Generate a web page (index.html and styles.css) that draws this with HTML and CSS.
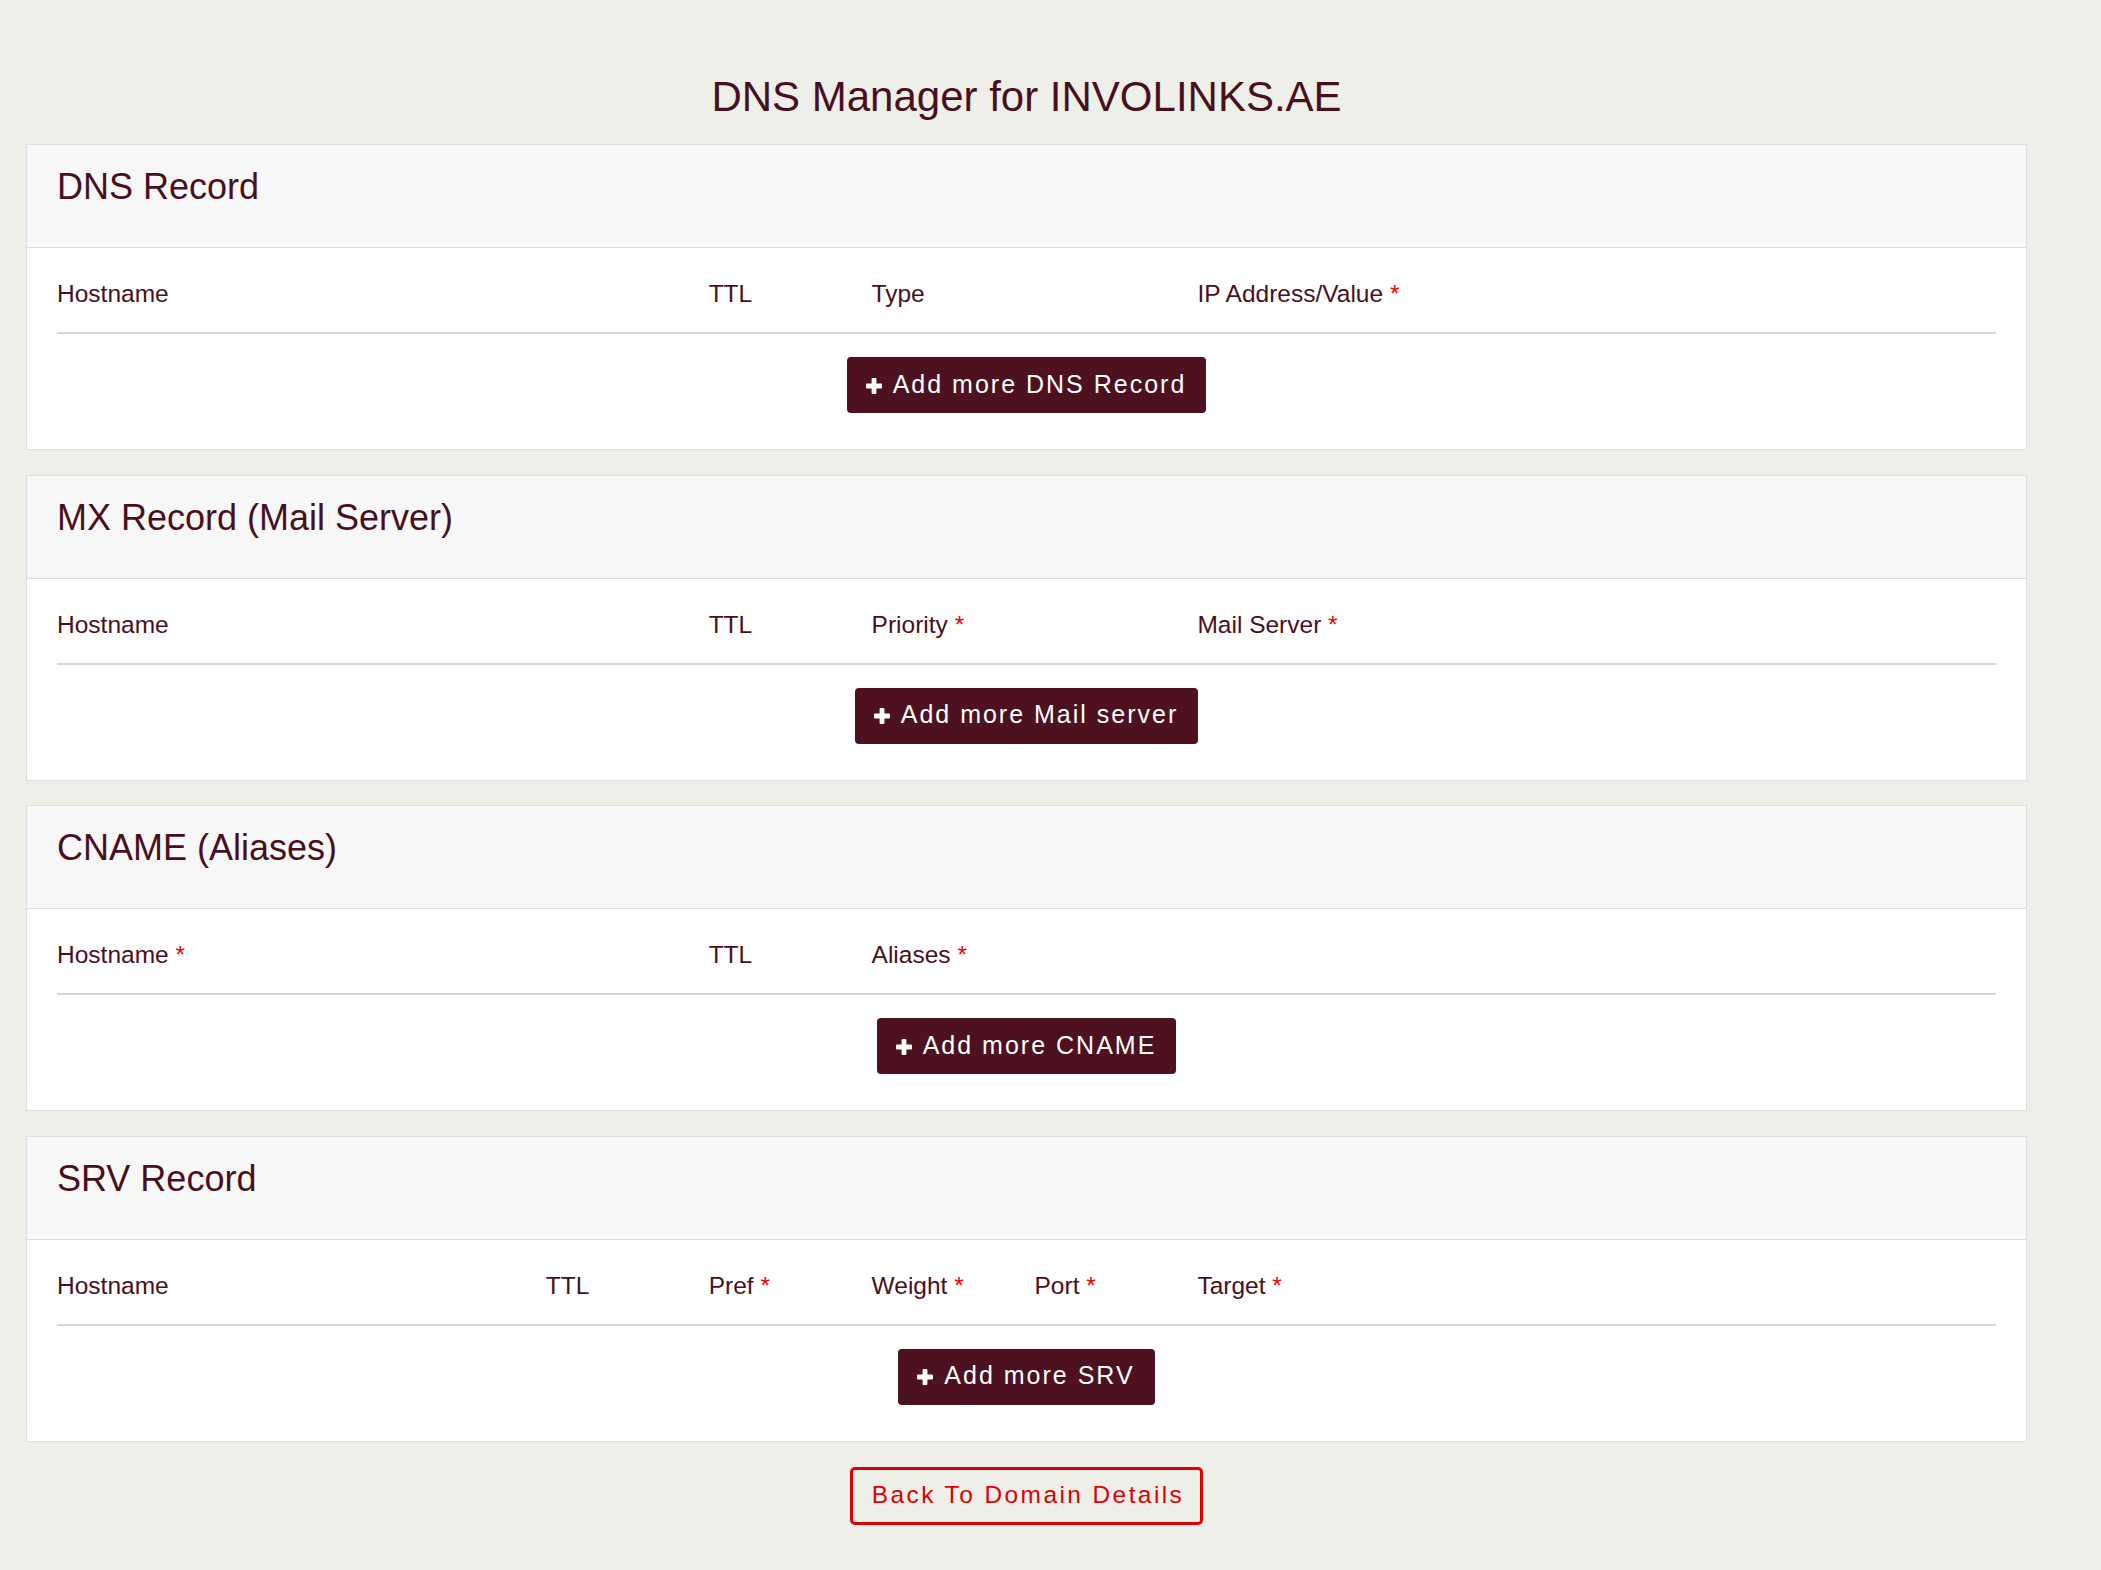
FILE: index.html
```html
<!DOCTYPE html>
<html lang="en">
<head>
<meta charset="utf-8">
<title>DNS Manager for INVOLINKS.AE</title>
<link rel="stylesheet" href="styles.css">
</head>
<body>
<div class="page">
  <h1 class="page-title">DNS Manager for INVOLINKS.AE</h1>

  <section class="card">
    <div class="card-header"><h2>DNS Record</h2></div>
    <div class="card-body">
      <div class="label-row">
        <div class="c0">Hostname</div>
        <div class="c4">TTL</div>
        <div class="c5">Type</div>
        <div class="c7">IP Address/Value <span class="req">*</span></div>
      </div>
      <div class="actions">
        <button class="btn-add" type="button"><svg class="plus" viewBox="0 0 16 16" aria-hidden="true"><rect x="5.6" y="0" width="4.8" height="16" rx="1"/><rect x="0" y="5.6" width="16" height="4.8" rx="1"/></svg><span>Add more DNS Record</span></button>
      </div>
    </div>
  </section>

  <section class="card">
    <div class="card-header"><h2>MX Record (Mail Server)</h2></div>
    <div class="card-body">
      <div class="label-row">
        <div class="c0">Hostname</div>
        <div class="c4">TTL</div>
        <div class="c5">Priority <span class="req">*</span></div>
        <div class="c7">Mail Server <span class="req">*</span></div>
      </div>
      <div class="actions">
        <button class="btn-add" type="button"><svg class="plus" viewBox="0 0 16 16" aria-hidden="true"><rect x="5.6" y="0" width="4.8" height="16" rx="1"/><rect x="0" y="5.6" width="16" height="4.8" rx="1"/></svg><span>Add more Mail server</span></button>
      </div>
    </div>
  </section>

  <section class="card">
    <div class="card-header"><h2>CNAME (Aliases)</h2></div>
    <div class="card-body">
      <div class="label-row">
        <div class="c0">Hostname <span class="req">*</span></div>
        <div class="c4">TTL</div>
        <div class="c5">Aliases <span class="req">*</span></div>
      </div>
      <div class="actions">
        <button class="btn-add" type="button"><svg class="plus" viewBox="0 0 16 16" aria-hidden="true"><rect x="5.6" y="0" width="4.8" height="16" rx="1"/><rect x="0" y="5.6" width="16" height="4.8" rx="1"/></svg><span>Add more CNAME</span></button>
      </div>
    </div>
  </section>

  <section class="card">
    <div class="card-header"><h2>SRV Record</h2></div>
    <div class="card-body">
      <div class="label-row">
        <div class="c0">Hostname</div>
        <div class="c3">TTL</div>
        <div class="c4">Pref <span class="req">*</span></div>
        <div class="c5">Weight <span class="req">*</span></div>
        <div class="c6">Port <span class="req">*</span></div>
        <div class="c7">Target <span class="req">*</span></div>
      </div>
      <div class="actions">
        <button class="btn-add" type="button"><svg class="plus" viewBox="0 0 16 16" aria-hidden="true"><rect x="5.6" y="0" width="4.8" height="16" rx="1"/><rect x="0" y="5.6" width="16" height="4.8" rx="1"/></svg><span>Add more SRV</span></button>
      </div>
    </div>
  </section>

  <div class="back-wrap">
    <button class="btn-back" type="button">Back To Domain Details</button>
  </div>
</div>
</body>
</html>
```

FILE: styles.css
```css
html, body {
  margin: 0;
  padding: 0;
}

body {
  background: #efefea;
  font-family: "Liberation Sans", Arial, sans-serif;
  color: #4a0f1c;
  min-height: 1570px;
}

.page {
  width: 2001px;
  margin-left: 26px;
  padding-bottom: 40px;
}

.page-title {
  margin: 72px 0 22px;
  font-size: 42px;
  line-height: 50px;
  font-weight: normal;
  text-align: center;
  color: #4a0f1c;
}

.card {
  background: #ffffff;
  border: 1px solid #dedede;
  margin-bottom: 24.67px;
}

.card:last-of-type {
  margin-bottom: 0;
}

.card-header {
  background: #f7f7f7;
  border-bottom: 1px solid #dcdcdc;
  padding: 20px 30px 0;
}

.card-header h2 {
  margin: 0 0 39px;
  font-size: 36px;
  line-height: 43px;
  font-weight: normal;
  color: #4a0f1c;
}

.card-body {
  padding: 28px 30px 36px;
}

.label-row {
  display: grid;
  grid-template-columns: repeat(12, minmax(0, 1fr));
  column-gap: 16px;
  font-size: 24.5px;
  line-height: 36px;
  padding-bottom: 20px;
  border-bottom: 2px solid #d6d6d6;
  white-space: nowrap;
}

.label-row > div { grid-row: 1; min-width: 0; }
.c0 { grid-column: 1 / span 3; }
.c3 { grid-column: 4; }
.c4 { grid-column: 5; }
.c5 { grid-column: 6; }
.c6 { grid-column: 7; }
.c7 { grid-column: 8 / span 5; }

.req {
  color: #f20000;
}

.actions {
  display: flex;
  justify-content: center;
  padding-top: 23px;
}

.btn-add {
  display: inline-flex;
  align-items: center;
  gap: 11px;
  height: 56px;
  padding: 0 20px 3px 19px;
  border: none;
  border-radius: 4px;
  background: #4e1120;
  color: #ffffff;
  font-family: "Liberation Sans", Arial, sans-serif;
  font-size: 25px;
  line-height: 30px;
  letter-spacing: 2px;
  cursor: pointer;
}

.plus {
  width: 16px;
  height: 16px;
  fill: #ffffff;
  flex: none;
  margin-top: 4px;
}

.back-wrap {
  display: flex;
  justify-content: center;
  padding-top: 25px;
}

.btn-back {
  height: 58px;
  padding: 0 16px 2px 19px;
  border: 3px solid #e10000;
  border-radius: 5px;
  background: transparent;
  color: #e10000;
  font-family: "Liberation Sans", Arial, sans-serif;
  font-size: 24.5px;
  line-height: 30px;
  letter-spacing: 2.4px;
  cursor: pointer;
}
```
